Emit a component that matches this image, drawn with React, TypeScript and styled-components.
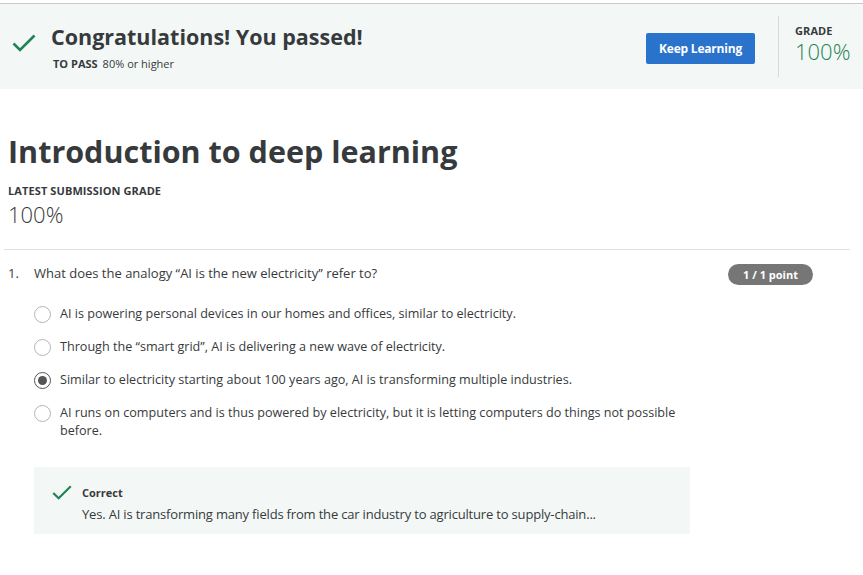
import React from "react";
import styled, { createGlobalStyle } from "styled-components";

const Global = createGlobalStyle`
  html, body { margin: 0; padding: 0; background: #fff; }
  body { font-family: "Open Sans", "Noto Sans", sans-serif; color: #373a3c; }
  * { box-sizing: border-box; }
`;

const Page = styled.div`
  width: 863px;
  padding-top: 3px;
`;

const Banner = styled.header`
  display: flex;
  align-items: center;
  height: 86px;
  background: #f3f8f6;
  border-top: 1px solid #c8c8c8;
  padding: 0 0 0 12px;
`;

const BannerMain = styled.div`
  display: flex;
  align-items: flex-start;
  flex: 1;
  gap: 15px;
`;

const IconSlot = styled.div`
  margin-top: 12px;
`;

const BannerText = styled.div`
  display: flex;
  flex-direction: column;
`;

const Headline = styled.h1`
  margin: 0;
  font-size: 21.5px;
  line-height: 30px;
  font-weight: 700;
  color: #373a3c;
`;

const PassLine = styled.div`
  margin-top: 4px;
  margin-left: 2px;
  font-size: 11px;
  color: #373a3c;
`;

const Strong = styled.span`
  font-weight: 700;
  margin-right: 5px;
`;

const PrimaryButton = styled.button`
  height: 31px;
  width: 109px;
  padding: 0;
  border: none;
  border-radius: 2px;
  background: #2a73cc;
  color: #fff;
  font-family: "Open Sans", sans-serif;
  font-weight: 700;
  font-size: 12px;
  letter-spacing: -0.2px;
  margin-right: 23px;
  margin-top: 3px;
`;

const GradeBox = styled.div`
  align-self: stretch;
  display: flex;
  flex-direction: column;
  gap: 1px;
  margin: 12px 0 12px 0;
  border-left: 1px solid #dadada;
  padding: 7px 0 0 16px;
  width: 85px;
`;

const Label = styled.div`
  font-size: 11px;
  font-weight: 700;
  line-height: 15px;
  letter-spacing: 0.1px;
  color: #373a3c;
`;

const BigGrade = styled.div<{ $green?: boolean }>`
  font-size: 22px;
  font-weight: 300;
  line-height: 25px;
  color: ${(p) => (p.$green ? "#1f8354" : "#373a3c")};
`;

const Content = styled.main`
  padding: 40px 13px 0 8px;
`;

const Title = styled.h2`
  margin: 0;
  font-size: 30.5px;
  font-weight: 700;
  line-height: 44px;
  color: #373a3c;
`;

const Summary = styled.div`
  display: flex;
  flex-direction: column;
  gap: 4px;
  margin-top: 10px;
  padding-bottom: 22px;
  border-bottom: 1px solid #e1e1e1;
  margin-left: -4px;
  padding-left: 4px;
`;

const QuestionRow = styled.div`
  display: flex;
  align-items: flex-start;
  margin-top: 14px;
  font-size: 13px;
`;

const QNum = styled.div`
  width: 26px;
`;

const QText = styled.div`
  flex: 1;
`;

const Badge = styled.span`
  background: #767676;
  color: #fff;
  font-weight: 700;
  font-size: 11px;
  line-height: 15px;
  border-radius: 11px;
  padding: 3px 0;
  width: 85px;
  text-align: center;
  margin-right: 37px;
  margin-top: 0;
`;

const Options = styled.div`
  display: flex;
  flex-direction: column;
  gap: 15px;
  margin: 20px 0 0 26px;
  width: 656px;
`;

const Option = styled.label`
  display: flex;
  align-items: flex-start;
  gap: 9px;
  font-size: 12.6px;
  line-height: 18px;
`;

const Radio = styled.span<{ $checked?: boolean }>`
  flex: none;
  width: 17px;
  height: 17px;
  border-radius: 50%;
  border: 1.5px solid ${(p) => (p.$checked ? "#555" : "#b4b4b4")};
  margin-top: 1px;
  display: flex;
  align-items: center;
  justify-content: center;
  &::after {
    content: "";
    display: ${(p) => (p.$checked ? "block" : "none")};
    width: 9px;
    height: 9px;
    border-radius: 50%;
    background: #555;
  }
`;

const Feedback = styled.div`
  display: flex;
  gap: 10px;
  margin: 27px 0 0 26px;
  width: 656px;
  background: #f3f8f6;
  padding: 18px 18px 11px 18px;
`;

const FeedbackTitle = styled.div`
  font-size: 11px;
  font-weight: 700;
  line-height: 15px;
`;

const FeedbackText = styled.div`
  font-size: 13px;
  margin-top: 5px;
  letter-spacing: -0.18px;
`;

const Check = ({ size }: { size: number }) => (
  <svg width={size} height={size * 0.75} viewBox="0 0 24 18" style={{ flex: "none" }}>
    <path d="M1.5 9.5 L8 16 L22.5 1.5" fill="none" stroke="#1f8354" strokeWidth="2.6" />
  </svg>
);

const options = [
  "AI is powering personal devices in our homes and offices, similar to electricity.",
  "Through the “smart grid”, AI is delivering a new wave of electricity.",
  "Similar to electricity starting about 100 years ago, AI is transforming multiple industries.",
  "AI runs on computers and is thus powered by electricity, but it is letting computers do things not possible before.",
];

export default function App() {
  return (
    <Page>
      <Global />
      <Banner>
        <BannerMain>
          <IconSlot>
            <Check size={24} />
          </IconSlot>
          <BannerText>
            <Headline>Congratulations! You passed!</Headline>
            <PassLine>
              <Strong>TO PASS</Strong>80% or higher
            </PassLine>
          </BannerText>
        </BannerMain>
        <PrimaryButton>Keep Learning</PrimaryButton>
        <GradeBox>
          <Label>GRADE</Label>
          <BigGrade $green>100%</BigGrade>
        </GradeBox>
      </Banner>
      <Content>
        <Title>Introduction to deep learning</Title>
        <Summary>
          <Label>LATEST SUBMISSION GRADE</Label>
          <BigGrade>100%</BigGrade>
        </Summary>
        <QuestionRow>
          <QNum>1.</QNum>
          <QText>What does the analogy “AI is the new electricity” refer to?</QText>
          <Badge>1 / 1 point</Badge>
        </QuestionRow>
        <Options>
          {options.map((o, i) => (
            <Option key={i}>
              <Radio $checked={i === 2} />
              <span>{o}</span>
            </Option>
          ))}
        </Options>
        <Feedback>
          <Check size={20} />
          <div>
            <FeedbackTitle>Correct</FeedbackTitle>
            <FeedbackText>
              Yes. AI is transforming many fields from the car industry to agriculture to supply-chain...
            </FeedbackText>
          </div>
        </Feedback>
      </Content>
    </Page>
  );
}
